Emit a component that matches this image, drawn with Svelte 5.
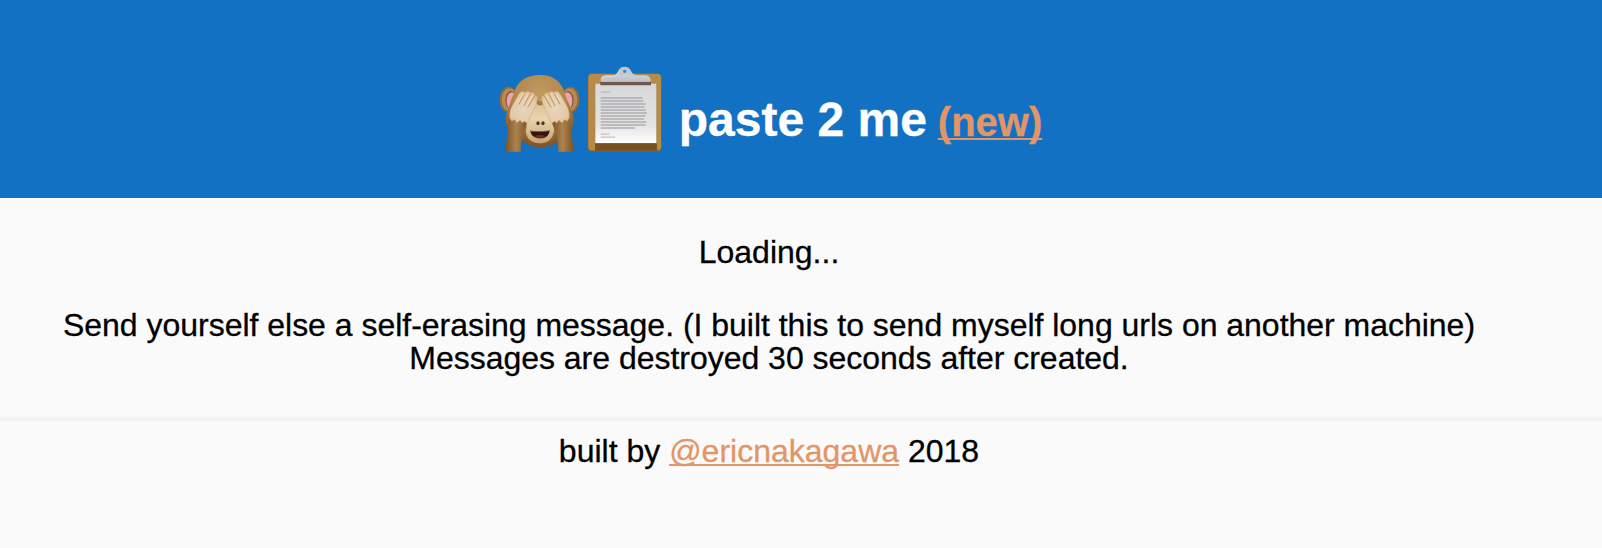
<script lang="ts">
    let loading = $state(true);

    // lines of small print on the clipboard: [y, width]
    const letterLines = [
        [112, 126], [121, 128], [130, 135], [139, 131], [148, 136],
        [157, 139], [166, 134], [175, 130], [184, 137], [193, 135], [202, 102],
    ];
</script>

<header>
    <h1>
        <svg width="90" height="100" viewBox="0 0 270 300" role="img" aria-label="see no evil monkey">
            <defs>
                <radialGradient id="fur" cx="0.5" cy="0.25" r="0.75">
                    <stop offset="0" stop-color="#c29a60" />
                    <stop offset="0.55" stop-color="#b0854c" />
                    <stop offset="1" stop-color="#7f5222" />
                </radialGradient>
                <linearGradient id="arm" x1="0" x2="1">
                    <stop offset="0" stop-color="#7d5223" />
                    <stop offset="0.5" stop-color="#ac824e" />
                    <stop offset="1" stop-color="#7d5223" />
                </linearGradient>
                <radialGradient id="hand" cx="0.5" cy="0.55" r="0.7">
                    <stop offset="0" stop-color="#e8d5be" />
                    <stop offset="0.65" stop-color="#e3c9a6" />
                    <stop offset="1" stop-color="#d2aa79" />
                </radialGradient>
                <linearGradient id="muzzle" x1="0" y1="0" x2="0" y2="1">
                    <stop offset="0" stop-color="#d8b98c" />
                    <stop offset="0.45" stop-color="#e8d6b1" />
                    <stop offset="1" stop-color="#c5a273" />
                </linearGradient>
                <g id="side">
                    <ellipse cx="56" cy="119" rx="27" ry="39" fill="#986a35" />
                    <ellipse cx="58" cy="119" rx="23" ry="34" fill="#b78b54" />
                    <ellipse cx="63" cy="121" rx="17" ry="28" fill="#855642" />
                    <ellipse cx="65" cy="123" rx="15" ry="26" fill="#efa3a5" />
                </g>
                <g id="arm-hand">
                    <path d="M59 176 Q55 205 51 231 Q48 254 45 275 L92 275 Q92 247 97 222 Q107 202 113 184Z" fill="url(#arm)" />
                    <path d="M59 174 C57 157 63 143 70 131 L86 103 C92 91 104 91 104 99 C108 92 118 92 121 99 C127 93 137 98 134 107 C145 104 144 117 140 128 C136 143 126 158 122 168 C120 180 117 187 111 190 L103 184 L97 189 L90 181 L81 189 L74 179 L65 184Z" fill="url(#hand)" stroke="#bd935f" stroke-width="1" />
                    <path d="M103 103 L87 132 M120 103 L102 137 M133 109 L114 141" fill="none" stroke="#b58a5c" stroke-width="2.8" stroke-linecap="round" />
                    <path d="M99 101 L84 128 M115 102 L98 133 M129 107 L111 136" fill="none" stroke="#efd9bb" stroke-width="4" stroke-linecap="round" opacity="0.7" />
                </g>
            </defs>
            <use href="#side" />
            <use href="#side" transform="translate(297 0) scale(-1 1)" />
            <path d="M47 169 C57 141 63 118 73 97 C81 64 110 45 150 45 C193 45 216 68 225 101 C233 129 247 145 251 172 C253 197 242 215 228 223 C208 243 190 262 150 262 C110 262 95 238 72 222 C53 213 45 192 47 169Z" fill="url(#fur)" />
            <path d="M101 143 C113 126 128 137 137 116 Q149 128 162 116 C173 135 191 125 198 149 C208 166 193 180 190 195 C198 219 184 250 151 250 C117 250 102 225 110 200 C109 180 94 164 101 143Z" fill="url(#muzzle)" />
            <path d="M139 115 Q151 132 163 115 L161 133 Q150 140 140 132Z" fill="#a67841" />
            <ellipse cx="144" cy="190" rx="5" ry="6" fill="#563523" />
            <ellipse cx="159" cy="190" rx="5" ry="6" fill="#563523" />
            <path d="M121 214 Q150 216 179 213 C176 229 165 236 150 235 C134 235 124 228 121 214Z" fill="#35140f" />
            <path d="M132 229 Q150 221 168 229 Q161 235 148 235 Q138 235 132 229Z" fill="#6b2d25" />
            <path d="M120 213 Q150 218 180 212" fill="none" stroke="#755136" stroke-width="2" />
            <use href="#arm-hand" />
            <use href="#arm-hand" transform="translate(297 0) scale(-1 1)" />
        </svg>
        <svg width="90" height="100" viewBox="0 0 270 300" role="img" aria-label="clipboard">
            <defs>
                <linearGradient id="board" x1="0" y1="0" x2="0" y2="1">
                    <stop offset="0" stop-color="#b88b4a" />
                    <stop offset="1" stop-color="#b98a42" />
                </linearGradient>
                <linearGradient id="paper" x1="0" y1="0" x2="0" y2="1">
                    <stop offset="0" stop-color="#d7d7d9" />
                    <stop offset="0.7" stop-color="#e3e3e4" />
                    <stop offset="1" stop-color="#ffffff" />
                </linearGradient>
                <linearGradient id="clip" x1="0" y1="0" x2="0" y2="1">
                    <stop offset="0" stop-color="#b6c4d4" />
                    <stop offset="0.65" stop-color="#c8ced5" />
                    <stop offset="1" stop-color="#b9bcc3" />
                </linearGradient>
            </defs>
            <rect x="23" y="42" width="222" height="232" rx="12" fill="#8c6330" />
            <rect x="25" y="41" width="218" height="230" rx="11" fill="url(#board)" />
            <rect x="45" y="248" width="186" height="24" fill="#795221" />
            <rect x="44" y="70" width="187" height="180" fill="#a4884f" />
            <rect x="46" y="71" width="183" height="178" fill="url(#paper)" />
            <rect x="61" y="64" width="152" height="12" rx="2" fill="#70564e" />
            <path d="M62 66 L62 59 Q63 46 78 46 L96 46 C109 46 110 39 115 33 C118 16 149 16 153 33 C158 40 160 46 173 46 L191 46 Q211 46 212 59 L212 66Z" fill="url(#clip)" />
            <path d="M64 58 Q67 49 79 49 L97 49 C111 48 113 39 119 34" fill="none" stroke="#dce3eb" stroke-width="2" />
            <circle cx="134" cy="34" r="5" fill="#4a84ba" />
            <g fill="#a9a9ac">
                <rect x="62" y="95" width="28" height="2.5" />
                {#each letterLines as [y, width]}
                    <rect x="62" {y} {width} height="4" />
                {/each}
                <rect x="62" y="221" width="26" height="2.5" />
                <rect x="62" y="230" width="43" height="2.5" />
            </g>
        </svg>
        <span class="name">paste 2 me</span>
        <a class="new" href="/">(new)</a>
    </h1>
</header>

<main>
    {#if loading}
        <p class="status">Loading...</p>
    {/if}
    <p class="about">
        Send yourself else a self-erasing message. (I built this to send myself long urls on another machine)<br />
        Messages are destroyed 30 seconds after created.
    </p>
</main>

<footer>
    built by <a href="https://twitter.com/ericnakagawa">@ericnakagawa</a> 2018
</footer>

<style>
    :global(body) {
        margin: 0;
        background-color: #fafafa;
        color: #000;
        font-family: Helvetica, "Liberation Sans", Arial, sans-serif;
        font-size: 32px;
        line-height: 33px;
        -webkit-text-stroke: 0.3px;
    }

    header {
        box-sizing: border-box;
        height: 198px;
        padding: 60px 70px 0 0;
        background-color: #1271c2;
    }

    h1 {
        display: flex;
        justify-content: center;
        align-items: flex-start;
        margin: 0;
        color: #fff;
        font-size: 48px;
        line-height: 56px;
    }

    h1 svg {
        display: block;
        flex: none;
    }

    .name {
        margin: 32px 11px 0 9px;
        white-space: nowrap;
    }

    .new {
        margin-top: 34px;
        font-size: 40px;
    }

    a {
        color: #e29668;
        text-decoration: underline;
        text-decoration-thickness: 2px;
        text-underline-offset: 2px;
        text-decoration-skip-ink: none;
    }

    main {
        padding: 38px 64px 0 0;
        text-align: center;
    }

    p {
        margin: 0;
        white-space: nowrap;
    }

    .about {
        margin-top: 40px;
        letter-spacing: -0.02px;
    }

    footer {
        margin-top: 42px;
        padding: 14px 64px 40px 0;
        border-top: 4px solid #f3f3f3;
        text-align: center;
    }
</style>
